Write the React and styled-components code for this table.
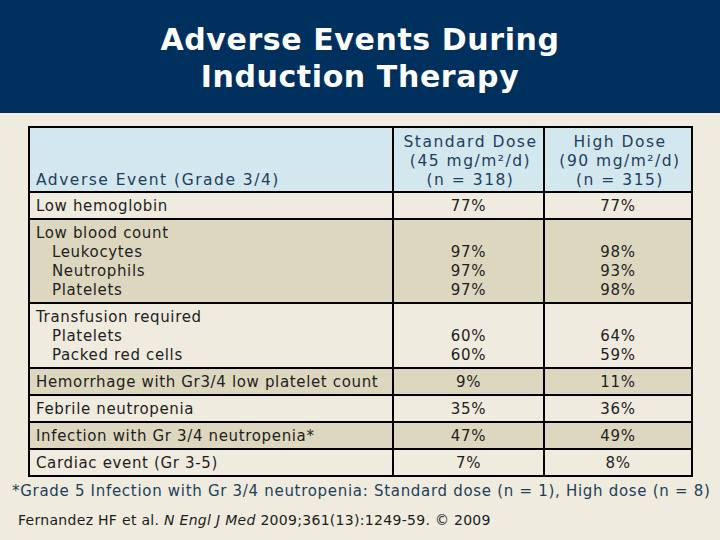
import styled, { createGlobalStyle } from "styled-components";

const GlobalStyle = createGlobalStyle`
  html, body {
    margin: 0;
    padding: 0;
    background: #efebde;
  }
  body {
    font-family: "DejaVu Sans", Verdana, sans-serif;
    width: 720px;
    height: 540px;
    overflow: hidden;
  }
`;

const rows = [
  { label: "Low hemoglobin", std: ["77%"], high: ["77%"] },
  {
    label: "Low blood count",
    sub: ["Leukocytes", "Neutrophils", "Platelets"],
    std: ["97%", "97%", "97%"],
    high: ["98%", "93%", "98%"],
    dark: true,
  },
  {
    label: "Transfusion required",
    sub: ["Platelets", "Packed red cells"],
    std: ["60%", "60%"],
    high: ["64%", "59%"],
  },
  { label: "Hemorrhage with Gr3/4 low platelet count", std: ["9%"], high: ["11%"], dark: true },
  { label: "Febrile neutropenia", std: ["35%"], high: ["36%"] },
  { label: "Infection with Gr 3/4 neutropenia*", std: ["47%"], high: ["49%"], dark: true },
  { label: "Cardiac event (Gr 3-5)", std: ["7%"], high: ["8%"] },
];

export default function App() {
  return (
    <>
      <GlobalStyle />
      <Header>
        <Title>
          Adverse Events During
          <br />
          Induction Therapy
        </Title>
      </Header>
      <Content>
        <Table>
          <colgroup>
            <col style={{ width: 364 }} />
            <col style={{ width: 151 }} />
            <col style={{ width: 148 }} />
          </colgroup>
          <thead>
            <tr>
              <HeadCell>Adverse Event (Grade 3/4)</HeadCell>
              <HeadCell $center>
                Standard Dose
                <br />
                (45 mg/m²/d)
                <br />
                (n = 318)
              </HeadCell>
              <HeadCell $center>
                High Dose
                <br />
                (90 mg/m²/d)
                <br />
                (n = 315)
              </HeadCell>
            </tr>
          </thead>
          <tbody>
            {rows.map((r) => {
              const blank = r.sub ? 1 : 0;
              return (
                <Row key={r.label} $dark={r.dark}>
                  <Cell>
                    {r.label}
                    {r.sub &&
                      r.sub.map((s) => <SubItem key={s}>{s}</SubItem>)}
                  </Cell>
                  <Cell $center>
                    {blank ? <Line>&nbsp;</Line> : null}
                    {r.std.map((v, i) => (
                      <Line key={i}>{v}</Line>
                    ))}
                  </Cell>
                  <Cell $center>
                    {blank ? <Line>&nbsp;</Line> : null}
                    {r.high.map((v, i) => (
                      <Line key={i}>{v}</Line>
                    ))}
                  </Cell>
                </Row>
              );
            })}
          </tbody>
        </Table>
        <Footnote>
          *Grade 5 Infection with Gr 3/4 neutropenia: Standard dose (n = 1), High dose (n = 8)
        </Footnote>
        <Citation>
          Fernandez HF et al. <em>N Engl J Med</em> 2009;361(13):1249-59. © 2009
        </Citation>
      </Content>
    </>
  );
}

const Header = styled.header`
  height: 113px;
  background: #00305e;
  display: flex;
  justify-content: center;
  align-items: flex-start;
  padding-top: 21px;
  box-sizing: border-box;
`;

const Title = styled.h1`
  margin: 0;
  color: #ffffff;
  font-family: "DejaVu Sans", Verdana, sans-serif;
  font-weight: bold;
  font-size: 30px;
  letter-spacing: 0.6px;
  line-height: 37px;
  text-align: center;
`;

const Content = styled.main`
  padding: 13px 0 0 0;
`;

const Table = styled.table`
  margin-left: 28px;
  width: 663px;
  border-collapse: collapse;
  table-layout: fixed;
  border: 2px solid #000;
  font-size: 15px;
  letter-spacing: 0.65px;
  line-height: 19px;
  color: #1e1e1e;
`;

const HeadCell = styled.th`
  background: #d3e7ef;
  color: #1f3e5c;
  font-weight: normal;
  font-size: 15.5px;
  letter-spacing: 1.5px;
  text-align: ${(p) => (p.$center ? "center" : "left")};
  vertical-align: bottom;
  padding: 3px 2px 1px 6px;
  border: 2px solid #000;
  line-height: 19px;
  height: 65px;
  box-sizing: border-box;
  white-space: nowrap;
`;

const Row = styled.tr`
  background: ${(p) => (p.$dark ? "#ddd7bf" : "#efebde")};
`;

const Cell = styled.td`
  border: 2px solid #000;
  padding: 4px 6px 2px 6px;
  text-align: ${(p) => (p.$center ? "center" : "left")};
  vertical-align: top;
  white-space: nowrap;
`;

const SubItem = styled.div`
  padding-left: 16px;
`;

const Line = styled.div``;

const Footnote = styled.p`
  margin: 5px 0 0 12px;
  font-size: 15px;
  letter-spacing: 0.7px;
  line-height: 19px;
  color: #1d4058;
  white-space: nowrap;
`;

const Citation = styled.p`
  margin: 10px 0 0 18px;
  font-size: 14px;
  letter-spacing: 0.3px;
  line-height: 18px;
  color: #1c1c1c;
  white-space: nowrap;
`;
